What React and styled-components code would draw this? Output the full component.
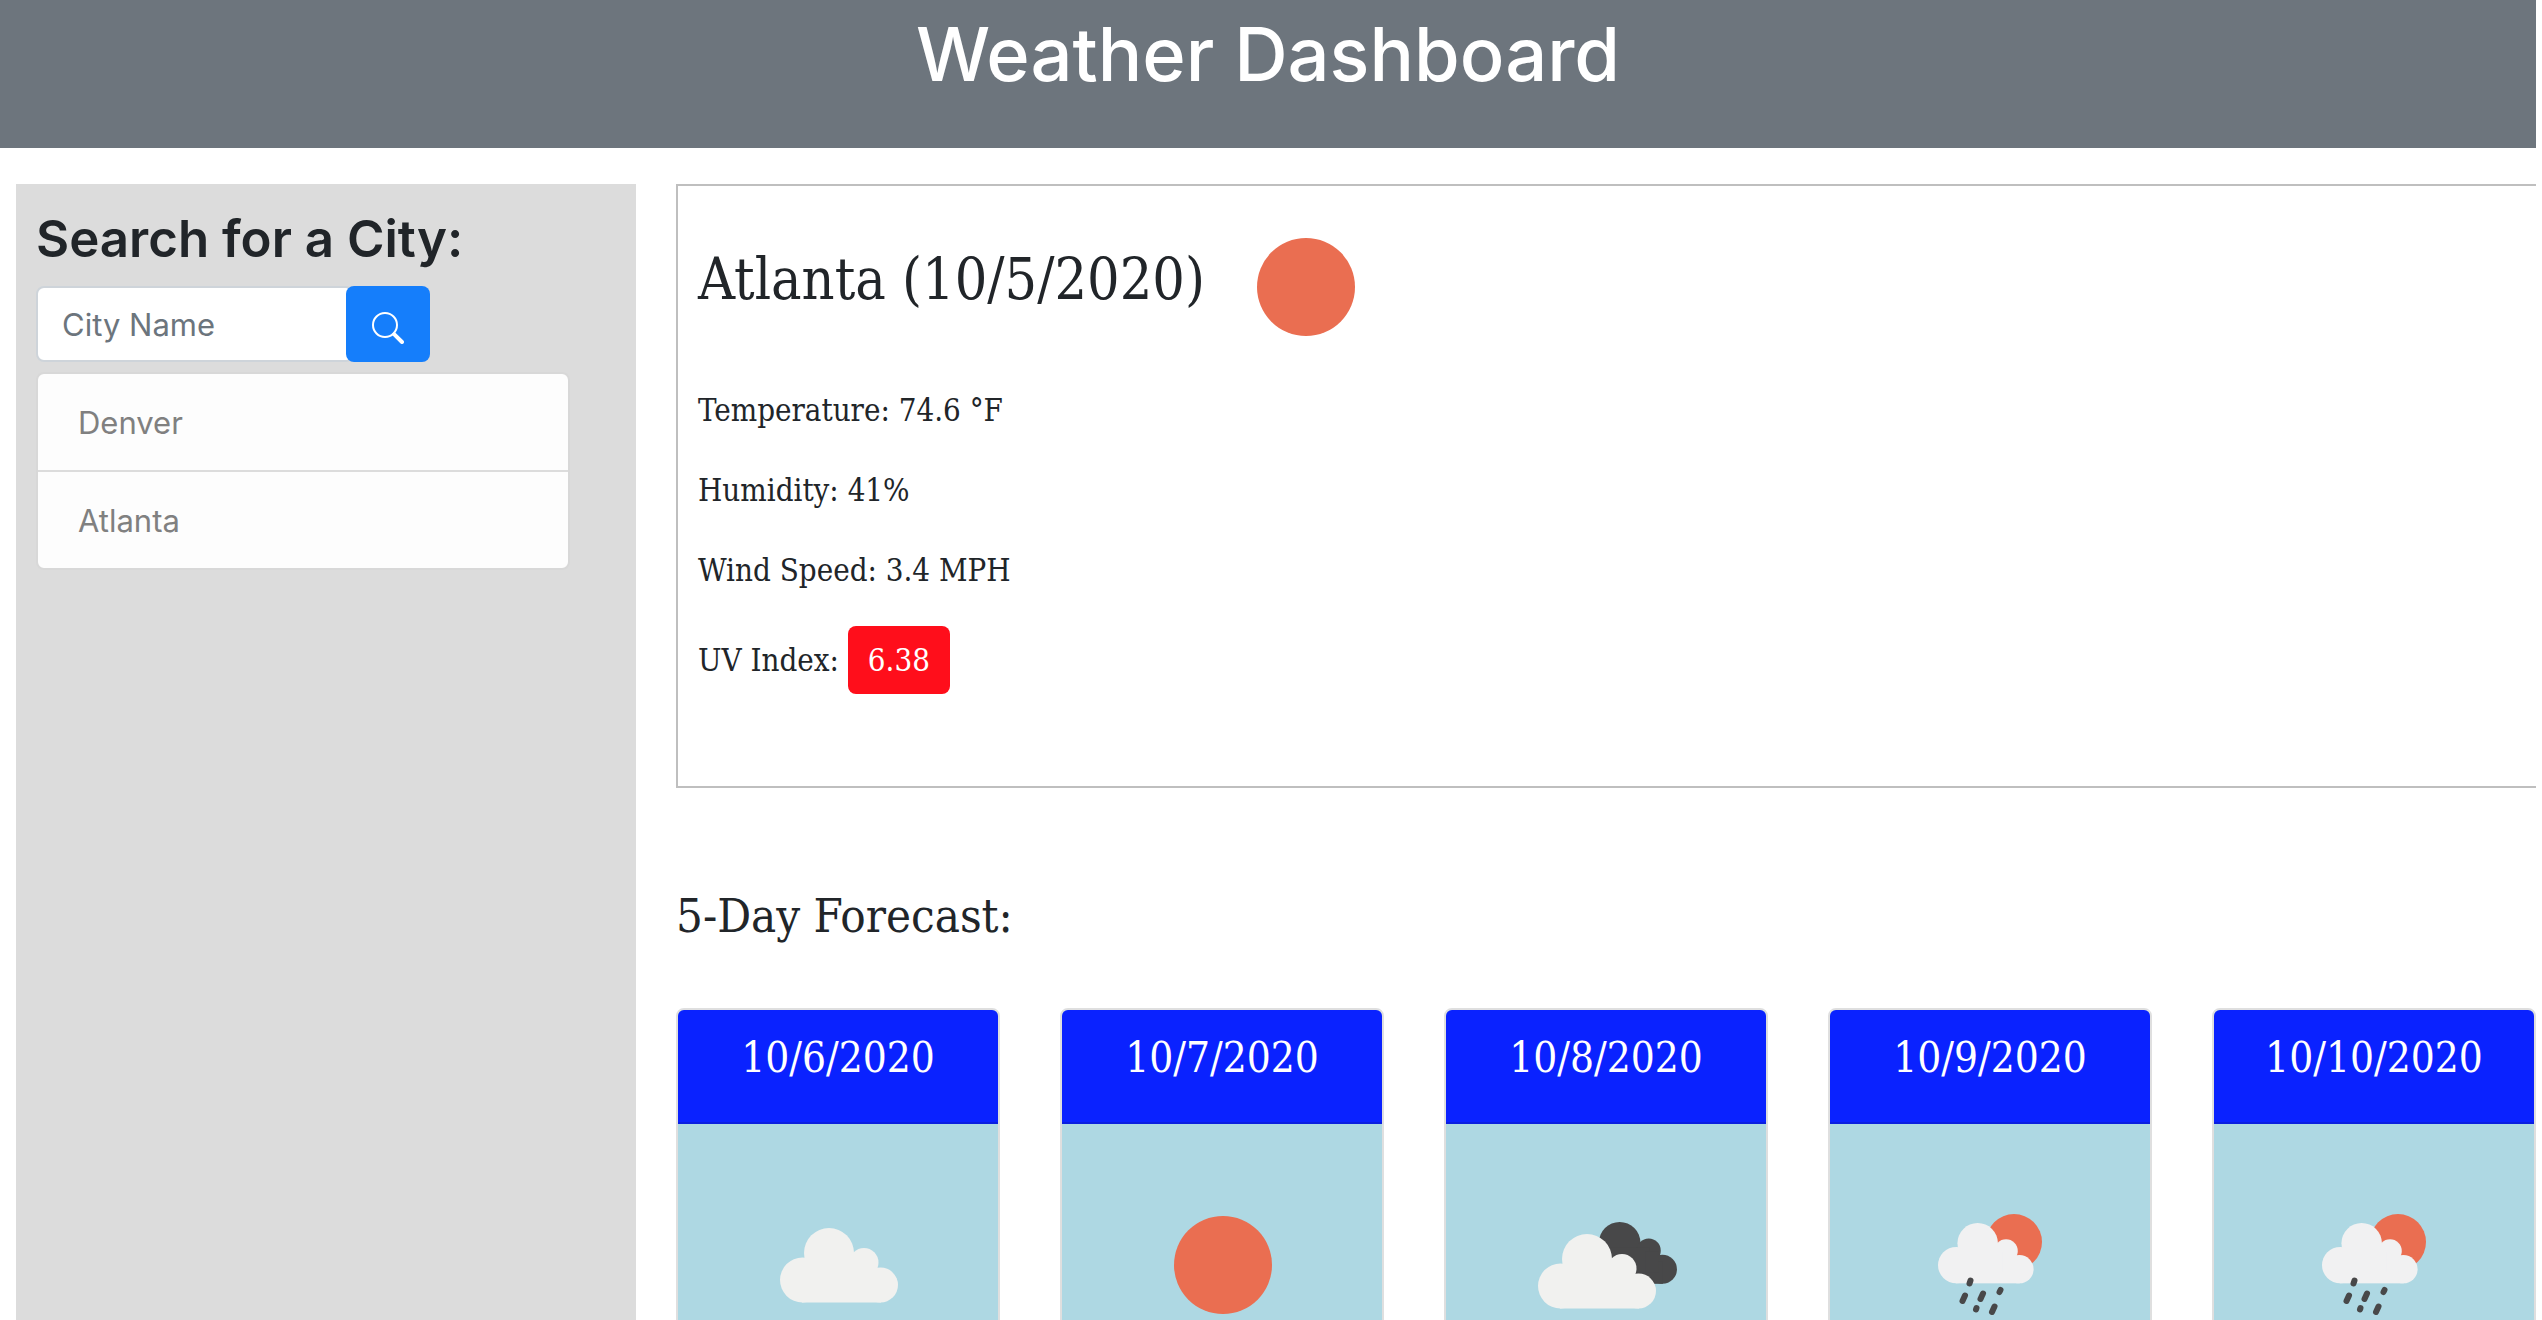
import React from "react";
import styled, { createGlobalStyle } from "styled-components";

const SANS = '"Inter", "Liberation Sans", sans-serif';
const SERIF = '"DejaVu Serif Condensed", "DejaVu Serif", serif';

const GlobalStyle = createGlobalStyle`
  *, *::before, *::after { box-sizing: border-box; }
  body {
    margin: 0;
    background: #fff;
    color: #212529;
    font-family: ${SANS};
    font-size: 31px;
    line-height: 48px;
  }
  h1, h2, h3, p, ul { margin: 0; padding: 0; font-weight: 400; }
`;

const Page = styled.div`
  display: flex;
  flex-direction: column;
  height: 100vh;
  overflow: hidden;
  padding-right: 6px;
`;

const Header = styled.header`
  flex: none;
  padding: 6px 0 46px;
  background: #6d757d;
  color: #fff;
  text-align: center;
`;

const Title = styled.h1`
  && { font-weight: 500; }
  font-size: 74px;
  line-height: 96px;
`;

const Layout = styled.div`
  flex: 1;
  min-height: 0;
  display: flex;
  gap: 40px;
  padding: 36px 0 0 16px;
`;

const Sidebar = styled.aside`
  flex: none;
  width: 620px;
  padding: 20px;
  background: #dcdcdc;
`;

const SidebarTitle = styled.label`
  display: block;
  font-weight: 600;
  font-size: 51px;
  line-height: 70px;
`;

const SearchForm = styled.form`
  display: flex;
  margin-top: 12px;
`;

const SearchInput = styled.input`
  width: 318px;
  height: 76px;
  margin-right: -8px;
  padding: 12px 24px;
  border: 2px solid #ced4da;
  border-radius: 8px;
  background: #fff;
  color: #495057;
  font: inherit;
  &::placeholder { color: #6c757d; opacity: 1; }
`;

const SearchButton = styled.button`
  display: flex;
  align-items: center;
  justify-content: center;
  width: 84px;
  height: 76px;
  padding: 8px 0 0;
  border: 0;
  border-radius: 8px;
  background: #157efb;
  color: #fff;
`;

const CityList = styled.ul`
  width: 534px;
  margin-top: 10px;
  border: 2px solid #d8d8d8;
  border-radius: 8px;
  background: #fdfdfd;
  list-style: none;
`;

const City = styled.li`
  padding: 25px 40px 23px;
  color: #808080;
  & + & { border-top: 2px solid #dcdcdc; }
`;

const Main = styled.main`
  flex: 1;
  min-width: 0;
  font-family: ${SERIF};
`;

const Current = styled.section`
  padding: 0 20px 62px;
  height: 604px;
  border: 2px solid #bfbfbf;
  border-right: 0;
`;

const CurrentHeading = styled.div`
  display: flex;
  align-items: center;
  height: 200px;
  padding-top: 2px;
`;

const CurrentTitle = styled.h2`
  font-size: 57px;
  line-height: 72px;
  padding-bottom: 16px;
`;

const Reading = styled.p`
  margin-bottom: 32px;
`;

const UvBadge = styled.span`
  display: inline-block;
  padding: 10px 20px;
  border-radius: 8px;
  background: #ff0e1b;
  color: #fff;
`;

const ForecastTitle = styled.h2`
  margin: 96px 0 60px;
  font-size: 47px;
  line-height: 64px;
`;

const Forecast = styled.section`
  display: grid;
  grid-template-columns: repeat(5, 1fr);
  gap: 60px;
`;

const Day = styled.article`
  min-height: 640px;
  border: 2px solid #dfdfdf;
  border-radius: 8px;
  background: #aed8e3;
  overflow: hidden;
  text-align: center;
`;

const DayDate = styled.h3`
  padding: 24px 0 40px;
  border-bottom: 2px solid #0a1fe0;
  background: #0a22ff;
  color: #fff;
  font-size: 42px;
  line-height: 48px;
`;

const DayBody = styled.div`
  padding: 41px 0;
`;

const WeatherIcon = styled.svg`
  flex: none;
  display: block;
  width: 200px;
  height: 200px;
  margin: ${(p) => (p.$inline ? "0" : "0 auto")};
`;

const Cloud = ({ fill, ...rest }) => (
  <g fill={fill} {...rest}>
    <circle cx="22.5" cy="52" r="22.5" />
    <circle cx="49" cy="25" r="25" />
    <circle cx="84" cy="34.5" r="14.5" />
    <circle cx="100.5" cy="57" r="17.5" />
    <rect x="22" y="48" width="79" height="26.5" />
    <rect x="27" y="31" width="58" height="30" />
    <rect x="80" y="35" width="16" height="26" />
  </g>
);

const drops = [
  [80.5, 115.5, 79.5, 118.5], [110.5, 125, 109.5, 127], [93, 128.5, 90.5, 134],
  [75, 130.5, 72.5, 136], [86.5, 143, 86, 144.5], [104.5, 141.5, 102, 147],
];

const art = {
  clear: <circle cx="101" cy="100" r="49" fill="#ea6e51" />,
  cloudy: <Cloud fill="#f1f1ef" transform="translate(42 63)" />,
  broken: (
    <>
      <Cloud fill="#484849" transform="translate(73 57) scale(0.83)" />
      <Cloud fill="#f1f1ef" transform="translate(32 69)" />
    </>
  ),
  showers: (
    <>
      <circle cx="124" cy="77" r="28" fill="#ea6e51" />
      <Cloud fill="#f1f1f2" transform="translate(48 58) scale(0.81)" />
      <g stroke="#484849" strokeWidth="6" strokeLinecap="round">
        {drops.map(([x1, y1, x2, y2]) => (
          <line key={x1} x1={x1} y1={y1} x2={x2} y2={y2} />
        ))}
      </g>
    </>
  ),
};

const Weather = ({ kind, inline }) => (
  <WeatherIcon viewBox="0 0 200 200" $inline={inline} role="img" aria-label={kind}>
    {art[kind]}
  </WeatherIcon>
);

const SearchGlyph = () => (
  <svg width="32" height="32" viewBox="0 0 16 16" fill="currentColor" aria-hidden="true">
    <path fillRule="evenodd" d="M10.442 10.442a1 1 0 0 1 1.415 0l3.85 3.85a1 1 0 0 1-1.414 1.415l-3.85-3.85a1 1 0 0 1 0-1.415z" />
    <path fillRule="evenodd" d="M6.5 12a5.5 5.5 0 1 0 0-11 5.5 5.5 0 0 0 0 11zM13 6.5a6.5 6.5 0 1 1-13 0 6.5 6.5 0 0 1 13 0z" />
  </svg>
);

const cities = ["Denver", "Atlanta"];
const readings = ["Temperature: 74.6 °F", "Humidity: 41%", "Wind Speed: 3.4 MPH"];
const days = [
  { date: "10/6/2020", kind: "cloudy" },
  { date: "10/7/2020", kind: "clear" },
  { date: "10/8/2020", kind: "broken" },
  { date: "10/9/2020", kind: "showers" },
  { date: "10/10/2020", kind: "showers" },
];

export default function App() {
  return (
    <Page>
      <GlobalStyle />
      <Header>
        <Title>Weather Dashboard</Title>
      </Header>
      <Layout>
        <Sidebar>
          <SidebarTitle htmlFor="city">Search for a City:</SidebarTitle>
          <SearchForm onSubmit={(e) => e.preventDefault()}>
            <SearchInput id="city" type="text" placeholder="City Name" />
            <SearchButton type="submit" aria-label="Search">
              <SearchGlyph />
            </SearchButton>
          </SearchForm>
          <CityList>
            {cities.map((c) => <City key={c}>{c}</City>)}
          </CityList>
        </Sidebar>
        <Main>
          <Current>
            <CurrentHeading>
              <CurrentTitle>Atlanta (10/5/2020)</CurrentTitle>
              <Weather kind="clear" inline />
            </CurrentHeading>
            {readings.map((r) => <Reading key={r}>{r}</Reading>)}
            <Reading>UV Index: <UvBadge>6.38</UvBadge></Reading>
          </Current>
          <ForecastTitle>5-Day Forecast:</ForecastTitle>
          <Forecast>
            {days.map((d) => (
              <Day key={d.date}>
                <DayDate>{d.date}</DayDate>
                <DayBody><Weather kind={d.kind} /></DayBody>
              </Day>
            ))}
          </Forecast>
        </Main>
      </Layout>
    </Page>
  );
}
